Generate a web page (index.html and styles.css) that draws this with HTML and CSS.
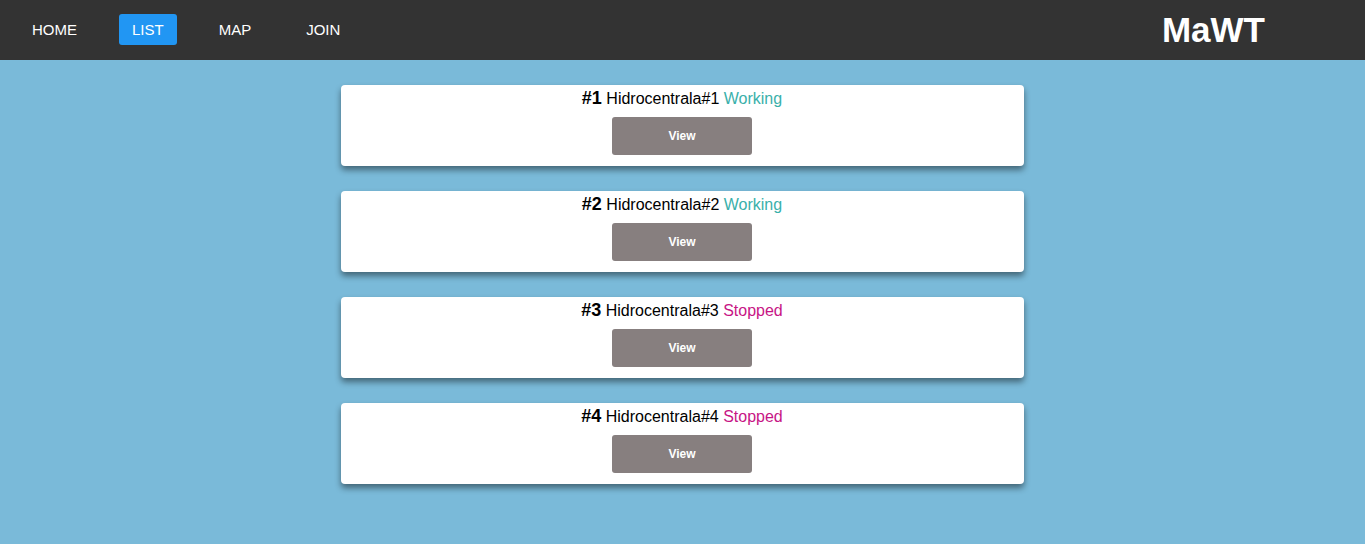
FILE: index.html
```html
<!DOCTYPE html>
<html>
<head>
<meta charset="utf-8">
<link rel="stylesheet" href="styles.css">
</head>
<body>
<header class="navbar">
  <nav class="nav-links">
    <a class="nav-link">HOME</a>
    <a class="nav-link active">LIST</a>
    <a class="nav-link">MAP</a>
    <a class="nav-link">JOIN</a>
  </nav>
  <div class="brand">MaWT</div>
</header>
<main class="list">
  <div class="card">
    <div class="title"><b class="num">#1</b> Hidrocentrala#1 <span class="working">Working</span></div>
    <button class="view-btn">View</button>
  </div>
  <div class="card">
    <div class="title"><b class="num">#2</b> Hidrocentrala#2 <span class="working">Working</span></div>
    <button class="view-btn">View</button>
  </div>
  <div class="card">
    <div class="title"><b class="num">#3</b> Hidrocentrala#3 <span class="stopped">Stopped</span></div>
    <button class="view-btn">View</button>
  </div>
  <div class="card">
    <div class="title"><b class="num">#4</b> Hidrocentrala#4 <span class="stopped">Stopped</span></div>
    <button class="view-btn">View</button>
  </div>
</main>
</body>
</html>
```
FILE: styles.css
```css
html, body {
  margin: 0;
  padding: 0;
}
body {
  background: #7abad9;
  font-family: "Liberation Sans", Arial, sans-serif;
  min-height: 544px;
}
.navbar {
  height: 60px;
  background: #333333;
  display: flex;
  align-items: center;
  justify-content: space-between;
  padding: 0 100px 0 19px;
}
.nav-links {
  display: flex;
  gap: 29px;
  margin-bottom: 2px;
}
.nav-link {
  color: #ffffff;
  font-size: 15px;
  line-height: 17px;
  padding: 7px 13px;
  border-radius: 3px;
}
.nav-link.active {
  background: #2196f3;
}
.brand {
  color: #ffffff;
  font-weight: bold;
  font-size: 35px;
  line-height: 40px;
}
.list {
  display: flex;
  flex-direction: column;
  align-items: center;
  gap: 25px;
  padding-top: 25px;
}
.card {
  width: 683px;
  height: 81px;
  box-sizing: border-box;
  background: #ffffff;
  border-radius: 4px;
  box-shadow: 0 4px 6px rgba(0, 0, 0, 0.45);
  display: flex;
  flex-direction: column;
  align-items: center;
}
.title {
  font-size: 16px;
  line-height: 22px;
  margin-top: 2px;
  margin-right: 1px;
  color: #000;
}
.num {
  font-size: 18px;
}
.working {
  color: #3ab0aa;
}
.stopped {
  color: #c71585;
}
.view-btn {
  margin-top: 7px;
  margin-right: 1px;
  width: 140px;
  height: 38px;
  background: #877f7f;
  color: #ffffff;
  border: none;
  border-radius: 3px;
  font-family: "Liberation Sans", Arial, sans-serif;
  font-weight: bold;
  font-size: 12px;
}
```
